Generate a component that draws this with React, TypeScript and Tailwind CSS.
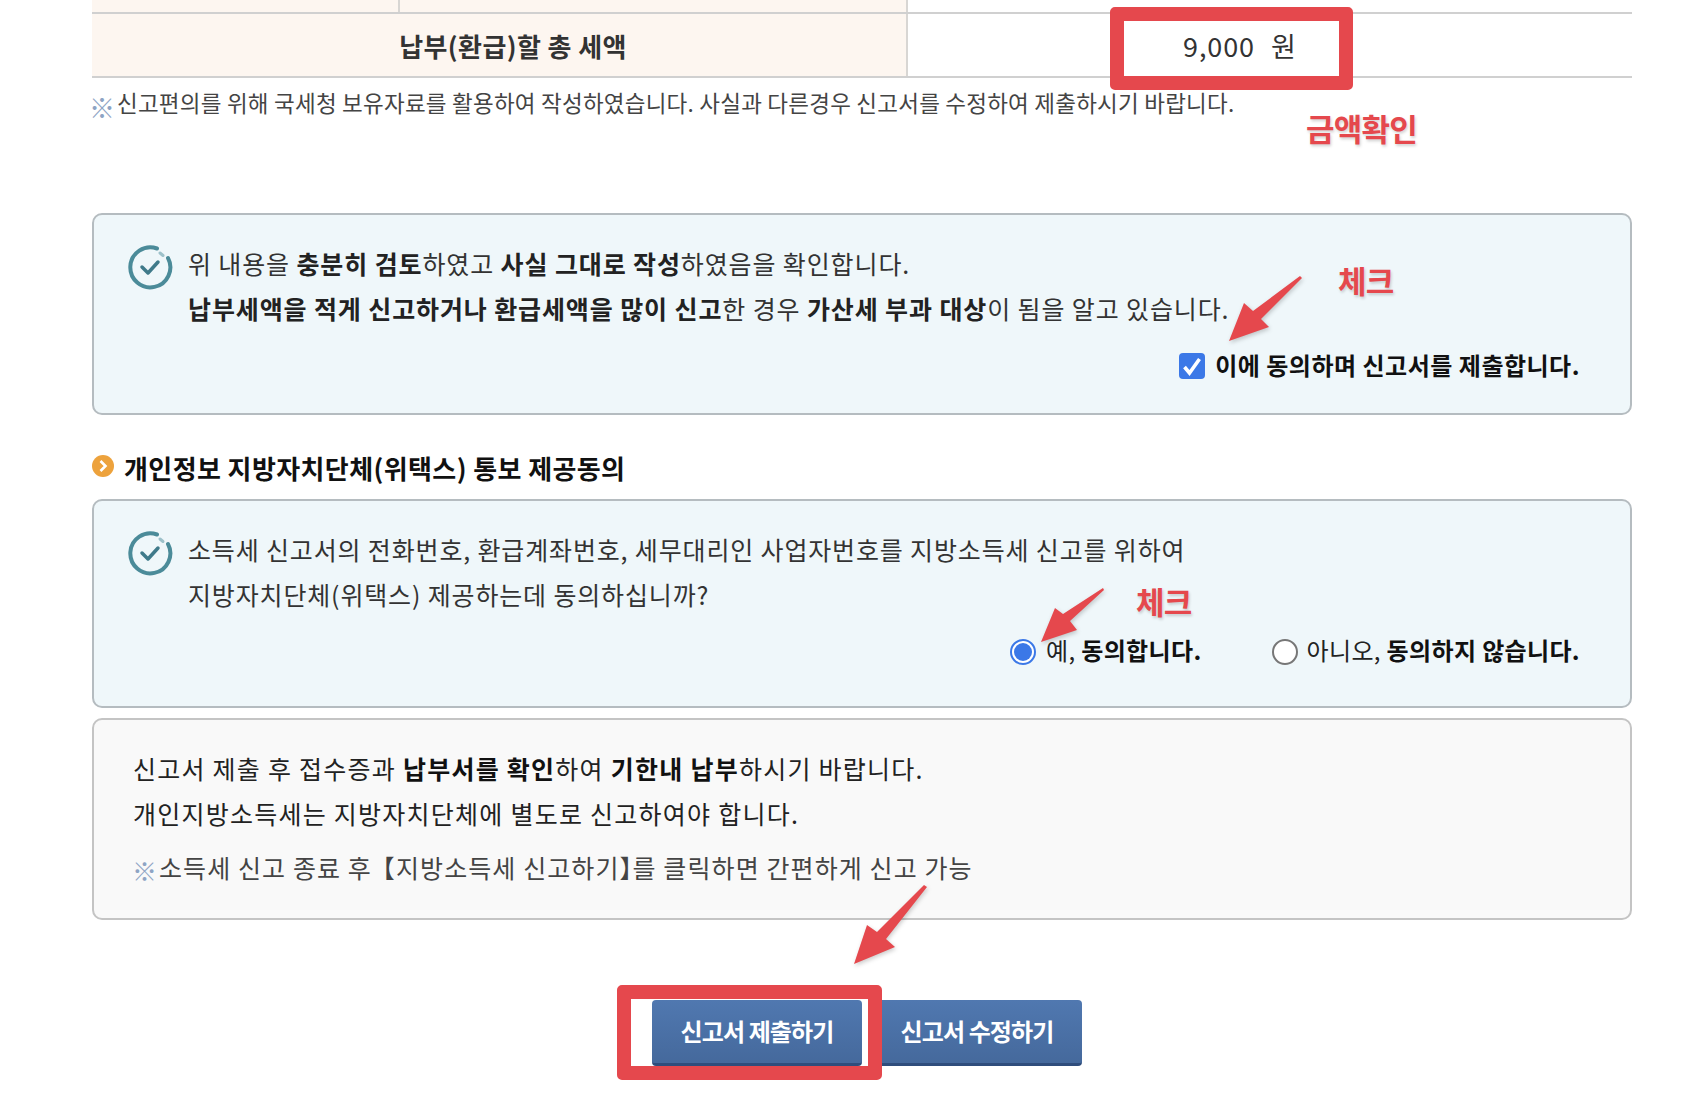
import React from 'react';

const FONT = '"Noto Sans CJK KR", "Noto Sans", sans-serif';

const CheckMark: React.FC = () => (
  <svg width="46" height="46" viewBox="0 0 46 46" fill="none" className="shrink-0">
    <path d="M30 4.5A20 20 0 1 0 41 14" stroke="#4b8b99" strokeWidth="4" strokeLinecap="round" />
    <path d="M33 9l3 2.5" stroke="#4b8b99" strokeWidth="3" strokeLinecap="round" opacity="0.5" />
    <path d="M15 23l6 6 10-11" stroke="#3f7a8a" strokeWidth="3.5" strokeLinecap="round" strokeLinejoin="round" />
  </svg>
);

// 빨간 화살표
const Arrow: React.FC<{ x: number; y: number; w: number; h: number; points: string }> = ({ x, y, w, h, points }) => (
  <svg
    width={w}
    height={h}
    viewBox={`0 0 ${w} ${h}`}
    className="absolute drop-shadow-[1px_2px_2px_rgba(0,0,0,0.2)]"
    style={{ left: x, top: y }}
  >
    <polygon points={points} fill="#e5484d" />
  </svg>
);

const Note: React.FC<{ children: React.ReactNode; className: string }> = ({ children, className }) => (
  <span
    className={`absolute font-bold text-[#e5484d] text-[31px] leading-none tracking-[-0.8px] [text-shadow:1px_2px_3px_rgba(0,0,0,0.18)] ${className}`}
  >
    {children}
  </span>
);

const Highlight: React.FC<{ className: string }> = ({ className }) => (
  <div className={`absolute border-[14px] border-[#e5484d] rounded-[5px] ${className}`} />
);

export default function App() {
  return (
    <div
      className="relative w-[1686px] h-[1096px] overflow-hidden bg-white pl-[92px] pr-[54px] text-[#222]"
      style={{ fontFamily: FONT }}
    >
      {/* 납부세액 표 */}
      <div className="flex h-[12px]">
        <div className="flex w-[816px] bg-[#fdf6f0]">
          <div className="w-[308px] border-r-2 border-[#d8d6d3]" />
          <div className="flex-1 border-r-2 border-[#d8d6d3]" />
        </div>
      </div>
      <div className="flex h-[66px] border-y-2 border-[#d0d0d0]">
        <div className="flex w-[816px] items-center justify-center border-r-2 border-[#d8d6d3] bg-[#fdf6f0] pl-[28px] text-[26px] font-bold tracking-[0.4px] text-[#333]">
          납부(환급)할 총 세액
        </div>
        <div className="flex flex-1 items-center pl-[275px] pt-[3px] text-[27px] tracking-[0.9px] text-[#333]">
          9,000<span className="ml-[16px]">원</span>
        </div>
      </div>
      <div className="mt-[8px] flex h-[39px] items-start text-[22.5px] leading-[32px] tracking-[0.23px] text-[#444]">
        <span className="mt-[5px] -ml-[3px] w-[28px] text-[26px] text-[#8ea4c4]">※</span>
        <span>신고편의를 위해 국세청 보유자료를 활용하여 작성하였습니다. 사실과 다른경우 신고서를 수정하여 제출하시기 바랍니다.</span>
      </div>

      {/* 검토 확인 */}
      <div className="mt-[88px] flex h-[202px] flex-col rounded-[10px] border-2 border-[#b5bcc0] bg-[#eff7fa] pl-[33px] pr-[50px] pt-[26px]">
        <div className="flex gap-[15px]">
          <div className="pt-[3px]"><CheckMark /></div>
          <div className="text-[25px] leading-[45px] tracking-[0.88px] text-[#333]">
            <p>
              위 내용을 <b className="text-[#222]">충분히 검토</b>하였고 <b className="text-[#222]">사실 그대로 작성</b>하였음을 확인합니다.
            </p>
            <p>
              <b className="text-[#222]">납부세액을 적게 신고하거나 환급세액을 많이 신고</b>한 경우 <b className="text-[#222]">가산세 부과 대상</b>이 됨을 알고 있습니다.
            </p>
          </div>
        </div>
        <div className="mt-[17px] flex items-center justify-end gap-[10px] text-[24px] font-bold leading-[34px] tracking-[0.5px] text-[#111]">
          <span className="flex h-[26px] w-[26px] items-center justify-center rounded-[4px] bg-[#3b78e7]">
            <svg width="24" height="24" viewBox="0 0 24 24" fill="none">
              <path d="M4.5 13l5 6L19.5 5" stroke="#fff" strokeWidth="3.6" />
            </svg>
          </span>
          <span className="pb-[2px]">이에 동의하며 신고서를 제출합니다.</span>
        </div>
      </div>

      {/* 위택스 제공동의 */}
      <div className="mt-[34px] flex h-[50px] items-start gap-[10px]">
        <svg width="22" height="22" viewBox="0 0 22 22" className="mt-[6px] shrink-0">
          <circle cx="11" cy="11" r="11" fill="#eda23c" />
          <path d="M8.5 6l5 5-5 5" stroke="#fff" strokeWidth="2.6" fill="none" />
        </svg>
        <h2 className="text-[26px] font-bold leading-[38px] tracking-[0.4px] text-[#111]">
          개인정보 지방자치단체(위택스) 통보 제공동의
        </h2>
      </div>
      <div className="flex h-[209px] flex-col rounded-[10px] border-2 border-[#b5bcc0] bg-[#eff7fa] pl-[33px] pr-[50px] pt-[26px]">
        <div className="flex gap-[15px]">
          <div className="pt-[3px]"><CheckMark /></div>
          <div className="text-[25px] leading-[45px] tracking-[0.85px] text-[#333]">
            <p>소득세 신고서의 전화번호, 환급계좌번호, 세무대리인 사업자번호를 지방소득세 신고를 위하여</p>
            <p>지방자치단체(위택스) 제공하는데 동의하십니까?</p>
          </div>
        </div>
        <div className="mt-[16px] flex items-center justify-end text-[24px] leading-[34px] tracking-[0.35px] text-[#222]">
          <span className="flex items-center gap-[10px]">
            <span className="flex h-[26px] w-[26px] items-center justify-center rounded-full border-2 border-[#3b78e7] bg-white">
              <span className="h-[18px] w-[18px] rounded-full bg-[#3b78e7]" />
            </span>
            <span className="pb-[4px]">예, <b className="text-[#111]">동의합니다.</b></span>
          </span>
          <span className="ml-[70px] flex items-center gap-[9px]">
            <span className="h-[26px] w-[26px] rounded-full border-2 border-[#777] bg-white" />
            <span className="pb-[4px]">아니오, <b className="text-[#111]">동의하지 않습니다.</b></span>
          </span>
        </div>
      </div>

      {/* 안내 */}
      <div className="mt-[10px] h-[202px] rounded-[10px] border-2 border-[#c4c4c4] bg-[#f9f9f9] pl-[39px] pt-[26px] text-[25px] leading-[45px] tracking-[1.25px] text-[#222]">
        <p>
          신고서 제출 후 접수증과 <b className="text-[#111]">납부서를 확인</b>하여 <b className="text-[#111]">기한내 납부</b>하시기 바랍니다.
        </p>
        <p>개인지방소득세는 지방자치단체에 별도로 신고하여야 합니다.</p>
        <p className="mt-[9px] flex tracking-[1.1px] text-[#444]">
          <span className="mt-[3px] -ml-[1px] w-[27px] text-[#8ea4c4]">※</span>
          <span>
            소득세 신고 종료 <span className="tracking-[-1px]">후</span>【지방소득세 신고하기<span className="tracking-[-12px]">】</span>를 클릭하면 간편하게 신고 가능
          </span>
        </p>
      </div>

      {/* 버튼 */}
      <div className="mt-[80px] flex justify-center gap-[10px] pl-[10px]">
        <button className="h-[66px] w-[210px] rounded-[4px] border-b-[3px] border-[#2f4d7c] bg-gradient-to-b from-[#5078b0] to-[#45699c] pb-[2px] text-[24px] font-bold tracking-[-0.9px] text-white">
          신고서 제출하기
        </button>
        <button className="h-[66px] w-[210px] rounded-[4px] border-b-[3px] border-[#2f4d7c] bg-gradient-to-b from-[#5078b0] to-[#45699c] pb-[2px] text-[24px] font-bold tracking-[-0.9px] text-white">
          신고서 수정하기
        </button>
      </div>

      {/* 주석 표시 */}
      <Highlight className="left-[1110px] top-[7px] h-[83px] w-[243px]" />
      <Highlight className="left-[617px] top-[985px] h-[95px] w-[265px]" />
      <Note className="left-[1306px] top-[112px]">금액확인</Note>
      <Note className="left-[1338px] top-[264px]">체크</Note>
      <Note className="left-[1136px] top-[585px]">체크</Note>
      <Arrow x={1225} y={272} w={80} h={72} points="75,4 77,6 36,47 44,55 4,69 19,31 28,39" />
      <Arrow x={1038} y={585} w={70} h={60} points="65,3 66,5 32,36 39,45 3,57 17,23 25,29" />
      <Arrow x={850} y={881} w={80} h={86} points="74,4 77,6 36,58 45,66 4,83 17,44 27,51" />
    </div>
  );
}
